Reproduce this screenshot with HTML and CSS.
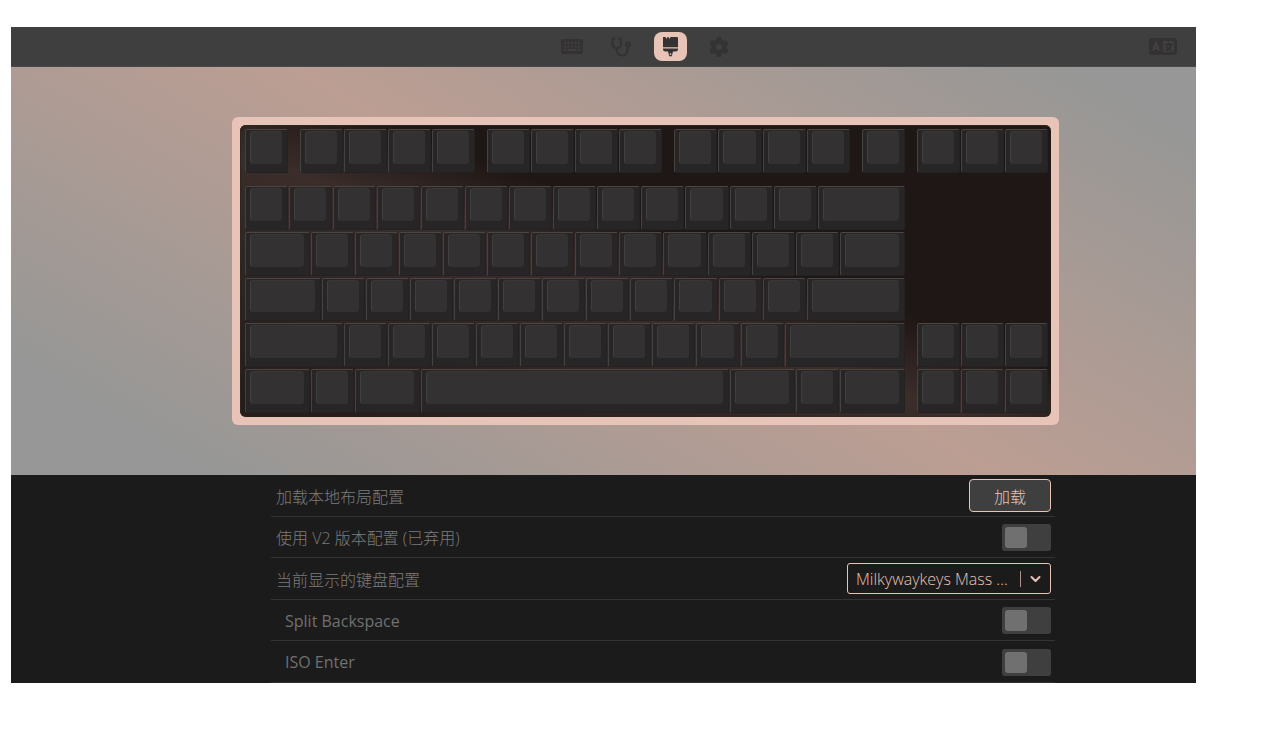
FILE: index.html
```html
<!DOCTYPE html>
<html lang="zh-CN">
<head>
  <meta charset="UTF-8">
  <title>VIA</title>
  <link rel="stylesheet" href="styles.css">
</head>
<body>
  <div class="app">
    <header class="topbar">
      <nav class="tabs">
        <a class="tab" href="#configure" aria-label="Configure">
          <svg width="22" height="15" viewBox="0 0 22 15" fill="currentColor">
            <path fill-rule="evenodd" d="M2 0h18a2 2 0 0 1 2 2v11a2 2 0 0 1-2 2H2a2 2 0 0 1-2-2V2a2 2 0 0 1 2-2zM3 3v2h2V3zm3.500 0v2h2V3zM10 3v2h2V3zm3.500 0v2h2V3zM17 3v2h2V3zM3 6.500v2h2v-2zm3.500 0v2h2v-2zm3.500 0v2h2v-2zm3.500 0v2h2v-2zm3.500 0v2h2v-2zM3 10v2h2v-2zm3.500 0v2h9v-2zM17 10v2h2v-2z"/>
          </svg>
        </a>
        <a class="tab" href="#test" aria-label="Key tester">
          <svg width="20" height="20" viewBox="0 0 20 20" fill="none" stroke="currentColor" stroke-width="2.200" stroke-linecap="round" stroke-linejoin="round">
            <path d="M3.500 1.500L1.500 2v5a4.300 4.300 0 0 0 8.600 0V2L8 1.500M5.800 11.500v2a5.300 5 0 0 0 10.600 0V10"/>
            <circle cx="17" cy="7.500" r="1.900"/>
          </svg>
        </a>
        <a class="tab active" href="#design" aria-label="Design">
          <svg width="15" height="20" viewBox="0 0 15 20" fill="currentColor">
            <path d="M0 0h2.500l1 2L4.500 0h1l1 2L7.500 0H14a1 1 0 0 1 1 1v9.200H0z"/>
            <path fill-rule="evenodd" d="M0 11.500h15v.5a2.500 2.500 0 0 1-2.500 2.500H10l-1 4a1.600 1.600 0 0 1-3 0l-1-4H2.500A2.500 2.500 0 0 1 0 12zM7.500 16.200a.9.9 0 1 0 0 1.800.9.9 0 0 0 0-1.800z"/>
          </svg>
        </a>
        <a class="tab" href="#settings" aria-label="Settings">
          <svg width="20" height="20" viewBox="0 0 512 512" fill="currentColor">
            <path d="M495.900 166.600c3.200 8.700 .5 18.400-6.400 24.600l-43.300 39.400c1.100 8.300 1.700 16.800 1.700 25.400s-.6 17.100-1.700 25.400l43.300 39.400c6.900 6.200 9.600 15.900 6.400 24.600c-4.400 11.900-9.700 23.300-15.800 34.300l-4.700 8.100c-6.600 11-14 21.400-22.100 31.200c-5.900 7.200-15.700 9.600-24.500 6.800l-55.700-17.700c-13.400 10.300-28.200 18.900-44 25.400l-12.500 57.100c-2 9.100-9 16.300-18.200 17.800c-13.800 2.300-28 3.500-42.500 3.500s-28.700-1.200-42.500-3.500c-9.200-1.500-16.200-8.700-18.200-17.800l-12.500-57.100c-15.800-6.500-30.600-15.100-44-25.400L83.100 425.900c-8.800 2.800-18.600 .3-24.500-6.800c-8.100-9.800-15.500-20.200-22.100-31.200l-4.700-8.100c-6.100-11-11.400-22.400-15.800-34.300c-3.200-8.700-.5-18.400 6.400-24.600l43.300-39.400C64.600 273.100 64 264.600 64 256s.6-17.100 1.700-25.400L22.400 191.200c-6.900-6.200-9.600-15.900-6.400-24.600c4.400-11.900 9.700-23.300 15.800-34.300l4.700-8.100c6.600-11 14-21.400 22.100-31.200c5.900-7.200 15.700-9.600 24.500-6.800l55.700 17.700c13.400-10.300 28.200-18.900 44-25.400l12.500-57.100c2-9.100 9-16.300 18.200-17.800C227.300 1.200 241.500 0 256 0s28.700 1.200 42.500 3.500c9.200 1.500 16.200 8.700 18.200 17.800l12.500 57.100c15.800 6.500 30.600 15.100 44 25.400l55.700-17.700c8.800-2.800 18.600-.3 24.500 6.800c8.100 9.800 15.500 20.200 22.100 31.200l4.700 8.100c6.100 11 11.400 22.400 15.800 34.300zM256 336a80 80 0 1 0 0-160 80 80 0 1 0 0 160z"/>
          </svg>
        </a>
      </nav>
      <button class="language" aria-label="Language">
        <svg width="28" height="17" viewBox="0 0 28 17">
          <rect width="28" height="17" rx="3" fill="#343233"/>
          <path d="M14 3h9.500a1.500 1.500 0 0 1 1.500 1.500v8a1.500 1.500 0 0 1-1.500 1.500H14z" fill="#3f3f3f"/>
          <path d="M4 12.500L7 5l3 7.500M5 10.300h4" fill="none" stroke="#434343" stroke-width="1.800"/>
          <path d="M16 6.500h7.500M19.700 4.700v1.800M22 6.500c-.6 3-2.700 5.200-5.200 6M17.300 8.500c1.200 2 3 3.400 5.200 4" fill="none" stroke="#302e2f" stroke-width="1.400"/>
        </svg>
      </button>
    </header>

    <main class="stage">
      <div class="case">
        <div class="plate" id="plate"></div>
      </div>
    </main>

    <section class="settings">
      <div class="row">
        <label for="load">加载本地布局配置</label>
        <button class="load" id="load">加载</button>
      </div>
      <div class="row">
        <label for="v2">使用 V2 版本配置 (已弃用)</label>
        <input class="toggle" id="v2" type="checkbox">
      </div>
      <div class="row">
        <label for="keyboard">当前显示的键盘配置</label>
        <div class="select">
          <select id="keyboard">
            <option>Milkywaykeys Mass ...</option>
          </select>
          <svg class="arrow" width="32" height="16" viewBox="0 0 32 16" fill="none" stroke="currentColor">
            <path d="M1.500 0v16" stroke-opacity=".7"/>
            <path d="M12.500 6l4 4 4-4" stroke-width="2" stroke-linecap="round" stroke-linejoin="round"/>
          </svg>
        </div>
      </div>
      <div class="row sub">
        <label for="split">Split Backspace</label>
        <input class="toggle" id="split" type="checkbox">
      </div>
      <div class="row sub">
        <label for="iso">ISO Enter</label>
        <input class="toggle" id="iso" type="checkbox">
      </div>
    </section>
  </div>

  <script src="keyboard.js"></script>
</body>
</html>
```

FILE: styles.css
```css
* {
  box-sizing: border-box;
}

body {
  margin: 0;
  min-height: 100vh;
  padding: 27px 67px 46px 11px;
  display: flex;
  background: #ffffff;
  font-family: "Open Sans", "Noto Sans CJK SC", sans-serif;
  font-size: 16px;
}

.app {
  flex: 1;
  display: flex;
  flex-direction: column;
  background: #1b1b1b;
}

.topbar {
  display: grid;
  grid-template-columns: 1fr auto 1fr;
  align-items: center;
  height: 40px;
  padding: 0 19px 0 103px;
  background: #3f3f3f;
  border-bottom: 1px solid #4a4849;
}

.tabs {
  grid-column: 2;
  display: flex;
  gap: 16px;
}

.tab {
  display: flex;
  justify-content: center;
  align-items: center;
  width: 33px;
  height: 29px;
  border-radius: 8px;
  color: #343233;
}

.tab.active {
  background: #e8c4b8;
}

.language {
  justify-self: end;
  display: flex;
  padding: 0;
  border: none;
  background: none;
  cursor: pointer;
}

.stage {
  display: flex;
  justify-content: center;
  padding: 50px 0 50px 84px;
  background: linear-gradient(30deg, #969796 10%, #bc9e93 50%, #969796 90%);
  background-size: calc(100% + 84px) 100%;
}

.case {
  width: 827px;
  padding: 8px;
  border-radius: 6px;
  background: #e8c4b8;
}

.plate {
  display: grid;
  grid-template-rows: 4fr 1fr repeat(5, 4fr);
  height: 292px;
  padding: 3px 2px 3px 5px;
  border-radius: 6px;
  background: linear-gradient(20deg, #261c1b 5%, #3a2d2a 45%, #1f1715 59%);
  box-shadow: inset 0 1px 1px #2b2826, inset 1px 0 1px #2b2826;
}

.keys {
  display: flex;
}

.slot {
  display: flex;
  padding: 1px 1px 1px 0;
}

.key {
  flex: 1;
  display: flex;
  padding: 1px 5px 8px 4px;
  background: #272526;
  border: 1px solid #232122;
  border-top-color: #494644;
  border-left-color: #454240;
  border-radius: 2px;
}

.cap {
  flex: 1;
  background: #333132;
  border-left: 1px solid #403f3f;
  border-top: 1px solid #383636;
  border-radius: 3px;
}

.settings {
  flex: 1;
  display: grid;
  grid-auto-rows: 1fr;
  justify-content: center;
  grid-template-columns: 784px;
  padding-left: 119px;
  color: #7c7c7c;
}

.row {
  display: flex;
  justify-content: space-between;
  align-items: center;
  padding: 1px 4px 0 5px;
  border-bottom: 1px solid #333333;
  font-weight: 300;
}

.sub {
  padding-left: 14px;
  color: #707070;
  font-weight: 400;
}

.load {
  width: 82px;
  height: 33px;
  border: 1px solid #e8c4b8;
  border-radius: 4px;
  background: #3f3f3f;
  color: #e8c4b8;
  font: inherit;
  cursor: pointer;
}

.toggle {
  appearance: none;
  width: 49px;
  height: 27px;
  margin: 0;
  padding: 3px;
  border-radius: 3px;
  background: #3f3f3f;
  cursor: pointer;
}

.toggle::before {
  content: "";
  display: block;
  width: 22px;
  height: 21px;
  border-radius: 3px;
  background: #707070;
}

.toggle:checked::before {
  margin-left: auto;
  background: #e8c4b8;
}

.select {
  position: relative;
  color: #e8c4b8;
}

.select select {
  appearance: none;
  display: block;
  width: 204px;
  height: 31px;
  padding: 0 32px 0 8px;
  border: 1px solid #e8c4b8;
  border-radius: 3px;
  background: #1b1b1b;
  color: inherit;
  font: inherit;
}

.arrow {
  position: absolute;
  right: 0;
  top: 8px;
  pointer-events: none;
}
```

FILE: keyboard.js
```js
// key widths in units, negative = empty space
const rows = [
  [1, -0.25, 1, 1, 1, 1, -0.25, 1, 1, 1, 1, -0.25, 1, 1, 1, 1, -0.25, 1, -0.25, 1, 1, 1],
  [], // gap under the function row
  [1, 1, 1, 1, 1, 1, 1, 1, 1, 1, 1, 1, 1, 2, -3.25],
  [1.5, 1, 1, 1, 1, 1, 1, 1, 1, 1, 1, 1, 1, 1.5, -3.25],
  [1.75, 1, 1, 1, 1, 1, 1, 1, 1, 1, 1, 1, 2.25, -3.25],
  [2.25, 1, 1, 1, 1, 1, 1, 1, 1, 1, 1, 2.75, -0.25, 1, 1, 1],
  [1.5, 1, 1.5, 7, 1.5, 1, 1.5, -0.25, 1, 1, 1]
];

const plate = document.getElementById("plate");

rows.forEach(row => {
  const line = document.createElement("div");
  line.className = "keys";
  row.forEach(size => {
    const slot = document.createElement("div");
    slot.style.width = Math.abs(size) / 18.25 * 100 + "%";
    if (size > 0) {
      slot.className = "slot";
      slot.innerHTML = '<div class="key"><div class="cap"></div></div>';
    }
    line.appendChild(slot);
  });
  plate.appendChild(line);
});
```
